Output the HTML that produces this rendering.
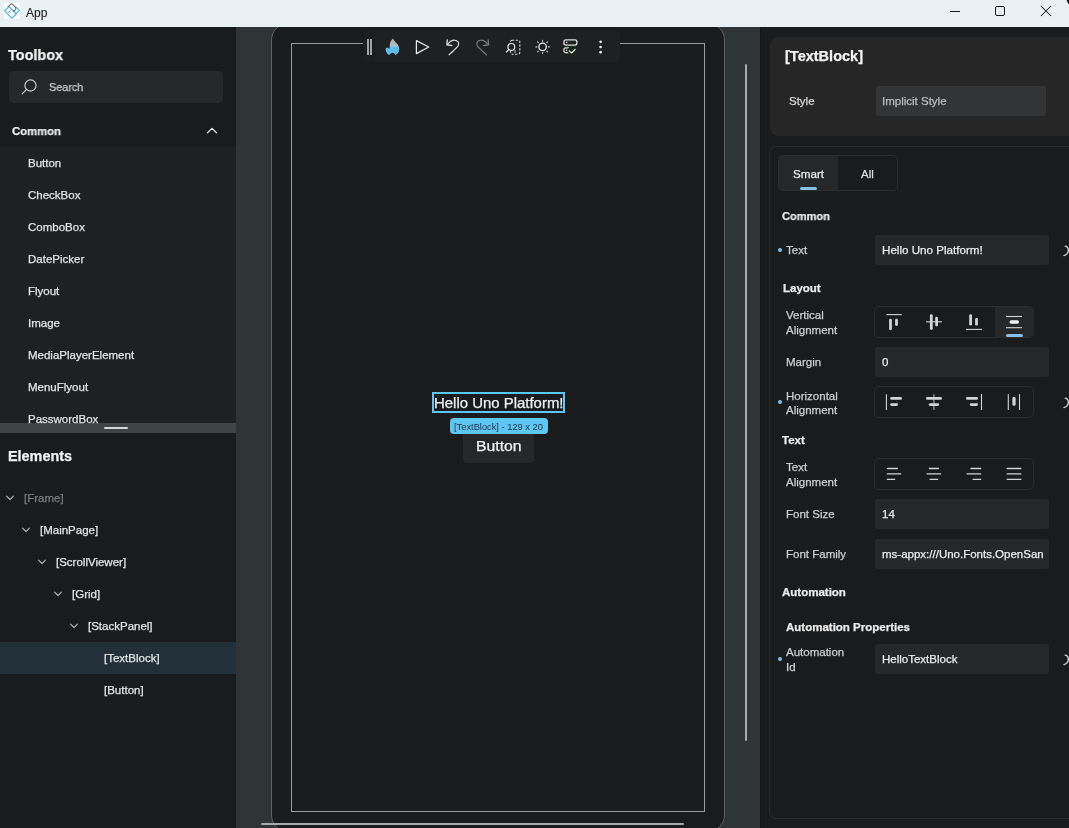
<!DOCTYPE html>
<html><head><meta charset="utf-8">
<style>
*{margin:0;padding:0;box-sizing:border-box}
html,body{width:1069px;height:828px;overflow:hidden;background:#1a1b1d;font-family:"Liberation Sans",sans-serif;position:relative}
.a{position:absolute}
.t{position:absolute;white-space:nowrap;line-height:1;-webkit-text-stroke:0.25px currentColor;will-change:transform}
</style></head><body>
<div class="a" style="left:0px;top:0px;width:1069px;height:27px;background:#eaf1f4;border-radius:0px;"></div>
<svg class="a" style="left:4px;top:3px" width="16" height="16" viewBox="0 0 16 16">
<rect width="16" height="16" fill="#f9fbfc"/>
<g fill="none" stroke-linejoin="round" stroke-linecap="round">
<path d="M0.6 7.7 L5.2 3.6 L12.4 11 L7.7 15.1 Z" stroke="#47b2f0" stroke-width="1.15"/>
<path d="M11.8 4.2 L15.5 7.4 L11.7 10.9" stroke="#47b2f0" stroke-width="1.1"/>
<path d="M4 3.7 L7.7 0.6 L11.6 4.1 C12 4.6 12 5.8 11.2 6.8 L9.4 8.5" stroke="#6c6c6c" stroke-width="1.1"/>
<path d="M4.4 9.4 L7.2 7" stroke="#5aa9d6" stroke-width="1"/>
</g>
</svg>
<div class="a" style="left:950px;top:11px;width:10px;height:1px;background:#1a1a1a;border-radius:0px;"></div>
<svg class="a" style="left:1064px;top:0px" width="5" height="5" viewBox="0 0 5 5"><path d="M2.6 0 H5 V4.2 C4 3.6 3.2 2 2.6 0 Z" fill="#1b1b1b"/></svg>
<div class="a" style="left:995px;top:6px;width:10px;height:10px;border:1px solid #1a1a1a;border-radius:2px"></div>
<svg class="a" style="left:1040px;top:5px" width="12" height="12" viewBox="0 0 12 12"><path d="M1 1L11 11M11 1L1 11" stroke="#1a1a1a" stroke-width="1.05"/></svg>
<div class="a" style="left:0px;top:27px;width:236px;height:801px;background:#1a1b1d;border-radius:0px;"></div>
<div class="a" style="left:9px;top:71px;width:214px;height:32px;background:#262729;border-radius:4px;"></div>
<svg class="a" style="left:18px;top:76px" width="22" height="22" viewBox="0 0 22 22"><circle cx="12.5" cy="9.5" r="5.6" fill="none" stroke="#cfcfcf" stroke-width="1.15"/><path d="M8.6 13.4 L4.2 17.9" stroke="#cfcfcf" stroke-width="1.15" stroke-linecap="round"/></svg>
<svg class="a" style="left:205px;top:125px" width="14" height="10" viewBox="0 0 14 10"><path d="M2.5 7.8 L7 3.4 L11.5 7.8" fill="none" stroke="#e6e6e6" stroke-width="1.25" stroke-linecap="round" stroke-linejoin="round"/></svg>
<div class="a" style="left:0px;top:147px;width:236px;height:276px;background:#1f2022;border-radius:0px;"></div>
<div class="a" style="left:0px;top:423px;width:236px;height:10px;background:#3f4446;border-radius:0px;"></div>
<div class="a" style="left:104px;top:427px;width:24px;height:2.2px;background:#d6d6d6;border-radius:1px;"></div>
<div class="a" style="left:0px;top:642px;width:236px;height:32px;background:#22303a;border-radius:0px;"></div>
<svg class="a" style="left:5px;top:494.2px" width="10" height="8" viewBox="0 0 10 8"><path d="M1.6 2.2 L5 5.6 L8.4 2.2" fill="none" stroke="#bdbdbd" stroke-width="1.1" stroke-linecap="round" stroke-linejoin="round"/></svg>
<svg class="a" style="left:21px;top:526.2px" width="10" height="8" viewBox="0 0 10 8"><path d="M1.6 2.2 L5 5.6 L8.4 2.2" fill="none" stroke="#bdbdbd" stroke-width="1.1" stroke-linecap="round" stroke-linejoin="round"/></svg>
<svg class="a" style="left:37px;top:558.2px" width="10" height="8" viewBox="0 0 10 8"><path d="M1.6 2.2 L5 5.6 L8.4 2.2" fill="none" stroke="#bdbdbd" stroke-width="1.1" stroke-linecap="round" stroke-linejoin="round"/></svg>
<svg class="a" style="left:53px;top:590.2px" width="10" height="8" viewBox="0 0 10 8"><path d="M1.6 2.2 L5 5.6 L8.4 2.2" fill="none" stroke="#bdbdbd" stroke-width="1.1" stroke-linecap="round" stroke-linejoin="round"/></svg>
<svg class="a" style="left:69px;top:622.2px" width="10" height="8" viewBox="0 0 10 8"><path d="M1.6 2.2 L5 5.6 L8.4 2.2" fill="none" stroke="#bdbdbd" stroke-width="1.1" stroke-linecap="round" stroke-linejoin="round"/></svg>
<div class="a" style="left:236px;top:27px;width:524px;height:801px;background:#2f3437;border-radius:0px;"></div>
<div class="a" style="left:236px;top:27px;width:524px;height:801px;overflow:hidden"><div class="a" style="left:35px;top:-4px;width:454px;height:809px;border:1px solid #5f6265;border-radius:17px;background:#1a1b1d"></div></div>
<div class="a" style="left:291px;top:43px;width:414px;height:769px;border:1px solid #9d9d9d"></div>
<div class="a" style="left:363px;top:31px;width:257px;height:31px;background:#1f2021;border-radius:4px;"></div>
<div class="a" style="left:363px;top:31px;width:12px;height:31px;background:#1c1d1f;border-radius:4px 0 0 4pxpx;"></div>
<div class="a" style="left:367px;top:39px;width:2px;height:16px;background:#a3a3a3;border-radius:0px;"></div>
<div class="a" style="left:370.3px;top:39px;width:2px;height:16px;background:#a3a3a3;border-radius:0px;"></div>
<svg class="a" style="left:384px;top:37px" width="17" height="20" viewBox="0 0 17 20">
<defs><linearGradient id="fl" gradientUnits="userSpaceOnUse" x1="0" y1="1.5" x2="0" y2="18.2"><stop offset="0" stop-color="#b4b4b4"/><stop offset="0.3" stop-color="#b2b4b6"/><stop offset="0.36" stop-color="#a9bccb"/><stop offset="0.47" stop-color="#9cc3dd"/><stop offset="0.52" stop-color="#5dbdec"/><stop offset="1" stop-color="#5cbcec"/></linearGradient></defs>
<path d="M8.9 1.5 C10 3.5 11.5 5 13 6.8 C14.8 8.8 15.5 11 15.2 13 C14.8 15.5 13.2 17.2 11.3 18.2 C11 16.5 10 15.6 8.6 15.7 C7.2 15.8 6.3 16.8 5.2 18.1 C3.2 17.1 1.9 15.2 1.7 13 C1.6 11.8 2 11 2.6 10.4 C3.5 10.6 4.5 11.2 5.3 11.7 C5.6 10 5.8 8.3 6 6.5 C6.3 4.6 7.3 3 8.9 1.5 Z" fill="url(#fl)"/>
</svg>
<svg class="a" style="left:413px;top:38px" width="18" height="18" viewBox="0 0 18 18"><path d="M3.4 2.6 L15.7 9 L3.4 15.6 Z" fill="none" stroke="#e8e8e8" stroke-width="1.25" stroke-linejoin="round"/></svg>
<svg class="a" style="left:443px;top:37px" width="18" height="20" viewBox="0 0 18 20"><path d="M4.6 7.3 C7 4.2 9.6 3.1 11.8 3.2 C14.8 3.4 16.3 5.8 15.4 8.3 C14.6 10.4 10 14 6 17.8" fill="none" stroke="#e2e2e2" stroke-width="1.15" stroke-linecap="round"/><path d="M4.3 2.9 L3.9 7.9 L8.9 8.5" fill="none" stroke="#e2e2e2" stroke-width="1.3" stroke-linecap="round" stroke-linejoin="round"/></svg>
<svg class="a" style="left:473px;top:37px" width="18" height="20" viewBox="0 0 18 20"><g transform="translate(19.5,0) scale(-1,1)"><path d="M4.6 7.3 C7 4.2 9.6 3.1 11.8 3.2 C14.8 3.4 16.3 5.8 15.4 8.3 C14.6 10.4 10 14 6 17.8" fill="none" stroke="#7a7a7a" stroke-width="1.15" stroke-linecap="round"/><path d="M4.3 2.9 L3.9 7.9 L8.9 8.5" fill="none" stroke="#7a7a7a" stroke-width="1.3" stroke-linecap="round" stroke-linejoin="round"/></g></svg>
<svg class="a" style="left:504px;top:37px" width="18" height="20" viewBox="0 0 18 20">
<rect x="6.5" y="3.2" width="9.3" height="14" rx="1.6" fill="none" stroke="#dcdcdc" stroke-width="1.1" stroke-dasharray="2.2 1.5"/>
<circle cx="7.3" cy="9.9" r="3.4" fill="#1f2021" stroke="#e6e6e6" stroke-width="1.2"/>
<path d="M4.9 12.4 L2.4 15" stroke="#e6e6e6" stroke-width="1.2" stroke-linecap="round"/>
<path d="M9.9 13.9 H12 M9.9 15.2 H12" stroke="#cfcfcf" stroke-width="0.7"/>
</svg>
<svg class="a" style="left:534px;top:38px" width="18" height="18" viewBox="0 0 18 18">
<circle cx="8.6" cy="8.9" r="3.7" fill="none" stroke="#ececec" stroke-width="1.3"/>
<g stroke="#d0d0d0" stroke-width="1.15" stroke-linecap="round">
<path d="M8.6 2.4 V3.3 M8.6 14.5 V15.4 M1.9 8.9 H2.8 M14.4 8.9 H15.3 M3.6 3.9 L4.3 4.6 M12.9 13.2 L13.6 13.9 M13.6 3.9 L12.9 4.6 M4.3 13.2 L3.6 13.9"/>
</g></svg>
<svg class="a" style="left:561px;top:38px" width="20" height="18" viewBox="0 0 20 18">
<rect x="2.9" y="1.9" width="13" height="5.1" rx="2" fill="none" stroke="#e0e0e0" stroke-width="1.25"/>
<rect x="4.9" y="3.7" width="1.4" height="1.4" fill="#e0e0e0"/>
<path d="M8 14.7 H4.8 C3.7 14.7 2.9 13.9 2.9 12.8 V11.8 C2.9 10.7 3.7 9.9 4.8 9.9 H8" fill="none" stroke="#e0e0e0" stroke-width="1.25"/>
<rect x="4.9" y="11.6" width="1.4" height="1.4" fill="#e0e0e0"/>
<circle cx="11" cy="12.5" r="4.4" fill="#142816"/>
<path d="M8.2 12.9 L10.6 15 L14.2 11.3" fill="none" stroke="#f0f0f0" stroke-width="1.1" stroke-linecap="round" stroke-linejoin="round"/>
</svg>
<svg class="a" style="left:596px;top:37px" width="9" height="20" viewBox="0 0 9 20"><g fill="#e8e8e8"><circle cx="4.6" cy="4.8" r="1.35"/><circle cx="4.6" cy="10" r="1.35"/><circle cx="4.6" cy="15.2" r="1.35"/></g></svg>
<div class="a" style="left:432px;top:392px;width:133px;height:21px;border:2px solid #5cc6f6"></div>
<div class="a" style="left:463px;top:430px;width:71px;height:33px;background:#262729;border-radius:4px;"></div>
<div class="a" style="left:450px;top:418px;width:98px;height:16px;background:#5ec6f4;border-radius:4px;"></div>
<div class="a" style="left:745.3px;top:64px;width:2px;height:677px;background:#a9a9a9;border-radius:1px;"></div>
<div class="a" style="left:261px;top:823px;width:423px;height:2.2px;background:#a9a9a9;border-radius:1px;"></div>
<div class="a" style="left:760px;top:27px;width:309px;height:801px;background:#1a1b1d;border-radius:0px;"></div>
<div class="a" style="left:760px;top:27px;width:1px;height:801px;background:#141517;border-radius:0px;"></div>
<div class="a" style="left:770px;top:37px;width:310px;height:99px;background:#262626;border-radius:8px;"></div>
<div class="a" style="left:876px;top:86px;width:170px;height:30px;background:#333435;border-radius:3px;"></div>
<div class="a" style="left:769px;top:146px;width:320px;height:673px;border:1px solid #28292b;border-radius:7px"></div>
<div class="a" style="left:778px;top:155px;width:120px;height:36px;border:1px solid #2c2d2f;border-radius:5px"></div>
<div class="a" style="left:779px;top:156px;width:59px;height:34px;background:#262729;border-radius:4px 0 0 4pxpx;"></div>
<div class="a" style="left:800px;top:186.9px;width:17px;height:3px;background:#84c0ea;border-radius:1.5px;"></div>
<div class="a" style="left:778px;top:248px;width:4px;height:4px;border-radius:50%;background:#7cc3ea"></div>
<div class="a" style="left:875px;top:235px;width:174px;height:30px;background:#262729;border-radius:3px;"></div>
<svg class="a" style="left:1062px;top:245px" width="8" height="12" viewBox="0 0 8 12"><path d="M3.2 1.2 C5.2 1.6 6.5 3.8 6.3 6 C6 8.3 4.5 9.8 2 10.6" fill="none" stroke="#dcdcdc" stroke-width="1.3" stroke-linecap="round"/></svg>
<div class="a" style="left:874px;top:306px;width:160px;height:32px;border:1px solid #2c2d2f;border-radius:5px"></div>
<div class="a" style="left:994.5px;top:307px;width:39px;height:30px;background:#262729;border-radius:0 4px 4px 0px;"></div>
<div class="a" style="left:1006px;top:334px;width:17px;height:3px;background:#84c0ea;border-radius:1.5px;"></div>
<svg class="a" style="left:874px;top:306px" width="160" height="32" viewBox="0 0 160 32">
<g stroke="#d4d4d4" stroke-linecap="round" fill="none">
<path d="M12.3 8.6 H27.7" stroke-width="1.1" stroke-linecap="butt"/><path d="M16.5 14.2 V22.8" stroke-width="2.8"/><path d="M22.5 14.2 V18.6" stroke-width="2.8"/>
<path d="M52 15.8 H68" stroke-width="1.1" stroke-linecap="butt"/><path d="M57.3 9.6 V22.6" stroke-width="2.8"/><path d="M62.6 12.2 V19" stroke-width="2.8"/>
<path d="M92 23.4 H108" stroke-width="1.1" stroke-linecap="butt"/><path d="M96.6 9.6 V18.2" stroke-width="2.8"/><path d="M102.5 13.4 V18.2" stroke-width="2.8"/>
<path d="M132 10.5 H148" stroke-width="1.1" stroke-linecap="butt"/><path d="M132 21.7 H148" stroke-width="1.1" stroke-linecap="butt"/><path d="M137.2 16 H143.3" stroke="#f2f2f2" stroke-width="3.4"/>
</g></svg>
<div class="a" style="left:875px;top:347px;width:174px;height:30px;background:#262729;border-radius:3px;"></div>
<div class="a" style="left:778px;top:399.5px;width:4px;height:4px;border-radius:50%;background:#7cc3ea"></div>
<div class="a" style="left:874px;top:386px;width:160px;height:32px;border:1px solid #2c2d2f;border-radius:5px"></div>
<svg class="a" style="left:874px;top:386px" width="160" height="32" viewBox="0 0 160 32">
<g stroke="#d4d4d4" stroke-linecap="round" fill="none">
<path d="M12.4 8.2 V24" stroke-width="1.1" stroke-linecap="butt"/><path d="M17.6 12.4 H26.6" stroke-width="2.8"/><path d="M17.6 18.6 H22.6" stroke-width="2.8"/>
<path d="M59.9 8.2 V24" stroke="#9a9a9a" stroke-width="1.3" stroke-linecap="butt"/><path d="M53.4 12.4 H66.6" stroke-width="2.8"/><path d="M56.2 18.6 H63.7" stroke-width="2.8"/>
<path d="M107.5 8.2 V24" stroke-width="1.1" stroke-linecap="butt"/><path d="M93.4 12.4 H102.6" stroke-width="2.8"/><path d="M97.2 18.6 H102.6" stroke-width="2.8"/>
<path d="M134.3 8.2 V24" stroke-width="1.1" stroke-linecap="butt"/><path d="M145.5 8.2 V24" stroke-width="1.1" stroke-linecap="butt"/><path d="M140 12.4 V18.2" stroke-width="3.2"/>
</g></svg>
<svg class="a" style="left:1062px;top:397px" width="8" height="12" viewBox="0 0 8 12"><path d="M3.2 1.2 C5.2 1.6 6.5 3.8 6.3 6 C6 8.3 4.5 9.8 2 10.6" fill="none" stroke="#dcdcdc" stroke-width="1.3" stroke-linecap="round"/></svg>
<div class="a" style="left:874px;top:458px;width:160px;height:32px;border:1px solid #2c2d2f;border-radius:5px"></div>
<svg class="a" style="left:874px;top:458px" width="160" height="32" viewBox="0 0 160 32">
<g stroke="#d4d4d4" stroke-width="1.4" stroke-linecap="round" fill="none">
<path d="M13.4 10.5 H23.3 M13.4 15.9 H26.6 M13.4 21.4 H20.6"/>
<path d="M55.4 10.5 H64.4 M53.2 15.9 H66.6 M56.2 21.4 H63.6"/>
<path d="M97 10.5 H106.6 M93.2 15.9 H106.6 M99.2 21.4 H106.6"/>
<path d="M133.2 10.5 H146.8 M133.2 15.9 H146.8 M133.2 21.4 H146.8"/>
</g></svg>
<div class="a" style="left:875px;top:499px;width:174px;height:30px;background:#262729;border-radius:3px;"></div>
<div class="a" style="left:875px;top:539px;width:174px;height:30px;background:#262729;border-radius:3px;"></div>
<div class="a" style="left:875px;top:539px;width:168px;height:30px;overflow:hidden">
<div class="t" style="left:7.00px;top:10.23px;font-size:11.5px;font-weight:normal;color:#ececec;">ms-appx:///Uno.Fonts.OpenSans</div>
</div>
<div class="a" style="left:778px;top:656.6px;width:4px;height:4px;border-radius:50%;background:#7cc3ea"></div>
<div class="a" style="left:875px;top:644px;width:174px;height:30px;background:#262729;border-radius:3px;"></div>
<svg class="a" style="left:1062px;top:654px" width="8" height="12" viewBox="0 0 8 12"><path d="M3.2 1.2 C5.2 1.6 6.5 3.8 6.3 6 C6 8.3 4.5 9.8 2 10.6" fill="none" stroke="#dcdcdc" stroke-width="1.3" stroke-linecap="round"/></svg>
<div class="t" style="left:26.00px;top:6.50px;font-size:12px;font-weight:normal;color:#1b1b1b;-webkit-text-stroke:0.1px currentColor">App</div>
<div class="t" style="left:8.00px;top:47.88px;font-size:14.5px;font-weight:bold;color:#f4f4f4;transform:scaleX(0.9945);transform-origin:0 0;">Toolbox</div>
<div class="t" style="left:49.00px;top:82.22px;font-size:11.5px;font-weight:normal;color:#cdcdcd;transform:scaleX(0.9413);transform-origin:0 0;">Search</div>
<div class="t" style="left:12.00px;top:126.42px;font-size:11.5px;font-weight:bold;color:#f0f0f0;transform:scaleX(0.9834);transform-origin:0 0;">Common</div>
<div class="t" style="left:28.00px;top:158.42px;font-size:11.5px;font-weight:normal;color:#e4e4e4;">Button</div>
<div class="t" style="left:28.00px;top:190.42px;font-size:11.5px;font-weight:normal;color:#e4e4e4;">CheckBox</div>
<div class="t" style="left:28.00px;top:222.42px;font-size:11.5px;font-weight:normal;color:#e4e4e4;">ComboBox</div>
<div class="t" style="left:28.00px;top:254.42px;font-size:11.5px;font-weight:normal;color:#e4e4e4;">DatePicker</div>
<div class="t" style="left:28.00px;top:286.43px;font-size:11.5px;font-weight:normal;color:#e4e4e4;">Flyout</div>
<div class="t" style="left:28.00px;top:318.43px;font-size:11.5px;font-weight:normal;color:#e4e4e4;">Image</div>
<div class="t" style="left:28.00px;top:350.43px;font-size:11.5px;font-weight:normal;color:#e4e4e4;">MediaPlayerElement</div>
<div class="t" style="left:28.00px;top:382.43px;font-size:11.5px;font-weight:normal;color:#e4e4e4;">MenuFlyout</div>
<div class="t" style="left:28.00px;top:414.43px;font-size:11.5px;font-weight:normal;color:#e4e4e4;">PasswordBox</div>
<div class="t" style="left:8.00px;top:449.77px;font-size:13.8px;font-weight:bold;color:#f4f4f4;transform:scaleX(1.0433);transform-origin:0 0;">Elements</div>
<div class="t" style="left:24.00px;top:493.03px;font-size:11.5px;font-weight:normal;color:#7d7d7d;">[Frame]</div>
<div class="t" style="left:40.00px;top:525.02px;font-size:11.5px;font-weight:normal;color:#e4e4e4;">[MainPage]</div>
<div class="t" style="left:56.00px;top:557.02px;font-size:11.5px;font-weight:normal;color:#e4e4e4;">[ScrollViewer]</div>
<div class="t" style="left:72.00px;top:589.02px;font-size:11.5px;font-weight:normal;color:#e4e4e4;">[Grid]</div>
<div class="t" style="left:88.00px;top:621.02px;font-size:11.5px;font-weight:normal;color:#e4e4e4;">[StackPanel]</div>
<div class="t" style="left:104.00px;top:653.02px;font-size:11.5px;font-weight:normal;color:#e4e4e4;">[TextBlock]</div>
<div class="t" style="left:104.00px;top:685.02px;font-size:11.5px;font-weight:normal;color:#e4e4e4;">[Button]</div>
<div class="t" style="left:433.70px;top:396.38px;font-size:14.5px;font-weight:normal;color:#f0f0f0;transform:scaleX(1.0301);transform-origin:0 0;">Hello Uno Platform!</div>
<div class="t" style="left:475.50px;top:439.97px;font-size:13.8px;font-weight:normal;color:#f0f0f0;transform:scaleX(1.1432);transform-origin:0 0;">Button</div>
<div class="t" style="left:454.20px;top:422.70px;font-size:9.3px;font-weight:normal;color:#26353f;transform:scaleX(0.9980);transform-origin:0 0;-webkit-text-stroke:0">[TextBlock] - 129 x 20</div>
<div class="t" style="left:785.00px;top:49.28px;font-size:14.5px;font-weight:bold;color:#f4f4f4;transform:scaleX(1.0015);transform-origin:0 0;">[TextBlock]</div>
<div class="t" style="left:789.00px;top:96.22px;font-size:11.5px;font-weight:normal;color:#d8d8d8;">Style</div>
<div class="t" style="left:882.00px;top:96.22px;font-size:11.5px;font-weight:normal;color:#bdbdbd;">Implicit Style</div>
<div class="t" style="left:792.80px;top:169.42px;font-size:11.5px;font-weight:normal;color:#ececec;transform:scaleX(1.0107);transform-origin:0 0;">Smart</div>
<div class="t" style="left:861.30px;top:169.42px;font-size:11.5px;font-weight:normal;color:#dedede;">All</div>
<div class="t" style="left:782.00px;top:211.22px;font-size:11.5px;font-weight:bold;color:#ececec;transform:scaleX(0.9633);transform-origin:0 0;">Common</div>
<div class="t" style="left:786.20px;top:245.03px;font-size:11.5px;font-weight:normal;color:#cfcfcf;">Text</div>
<div class="t" style="left:882.00px;top:245.03px;font-size:11.5px;font-weight:normal;color:#ececec;transform:scaleX(1.0100);transform-origin:0 0;">Hello Uno Platform!</div>
<div class="t" style="left:782.60px;top:283.23px;font-size:11.5px;font-weight:bold;color:#ececec;">Layout</div>
<div class="t" style="left:786.00px;top:309.93px;font-size:11.5px;font-weight:normal;color:#cfcfcf;">Vertical</div>
<div class="t" style="left:786.00px;top:324.73px;font-size:11.5px;font-weight:normal;color:#cfcfcf;">Alignment</div>
<div class="t" style="left:786.00px;top:356.93px;font-size:11.5px;font-weight:normal;color:#cfcfcf;">Margin</div>
<div class="t" style="left:882.00px;top:356.93px;font-size:11.5px;font-weight:normal;color:#ececec;">0</div>
<div class="t" style="left:786.00px;top:390.53px;font-size:11.5px;font-weight:normal;color:#cfcfcf;">Horizontal</div>
<div class="t" style="left:786.00px;top:405.33px;font-size:11.5px;font-weight:normal;color:#cfcfcf;">Alignment</div>
<div class="t" style="left:782.00px;top:434.73px;font-size:11.5px;font-weight:bold;color:#ececec;">Text</div>
<div class="t" style="left:786.00px;top:462.12px;font-size:11.5px;font-weight:normal;color:#cfcfcf;">Text</div>
<div class="t" style="left:786.00px;top:476.73px;font-size:11.5px;font-weight:normal;color:#cfcfcf;">Alignment</div>
<div class="t" style="left:786.00px;top:509.23px;font-size:11.5px;font-weight:normal;color:#cfcfcf;">Font Size</div>
<div class="t" style="left:882.00px;top:509.23px;font-size:11.5px;font-weight:normal;color:#ececec;">14</div>
<div class="t" style="left:786.00px;top:549.23px;font-size:11.5px;font-weight:normal;color:#cfcfcf;">Font Family</div>
<div class="t" style="left:782.00px;top:586.93px;font-size:11.5px;font-weight:bold;color:#ececec;">Automation</div>
<div class="t" style="left:786.00px;top:621.93px;font-size:11.5px;font-weight:bold;color:#ececec;">Automation Properties</div>
<div class="t" style="left:786.00px;top:647.02px;font-size:11.5px;font-weight:normal;color:#cfcfcf;">Automation</div>
<div class="t" style="left:786.00px;top:661.93px;font-size:11.5px;font-weight:normal;color:#cfcfcf;">Id</div>
<div class="t" style="left:882.00px;top:654.02px;font-size:11.5px;font-weight:normal;color:#ececec;">HelloTextBlock</div>
</body></html>
